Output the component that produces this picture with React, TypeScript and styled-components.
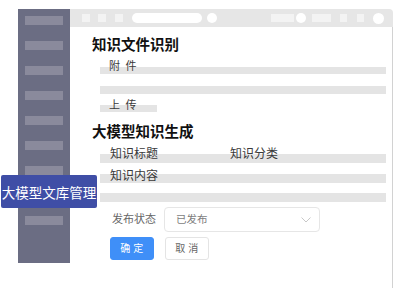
import React from 'react';
import styled, { createGlobalStyle } from 'styled-components';

const GlobalStyle = createGlobalStyle`
  html, body {
    margin: 0;
    padding: 0;
    background: #ffffff;
  }
  body {
    font-family: "Noto Sans CJK SC", "Noto Sans", sans-serif;
    color: #333;
  }
`;

const Page = styled.div`
  position: relative;
  width: 400px;
  height: 288px;
  overflow: hidden;
`;

const Frame = styled.div`
  display: flex;
  align-items: flex-start;
  margin-left: 18px;
  padding-top: 9px;
  height: 279px;
`;

const Sidebar = styled.div`
  width: 52px;
  height: 254px;
  background: #6b6d83;
  display: flex;
  flex-direction: column;
  align-items: center;
  gap: 16px;
  padding-top: 7px;
  box-sizing: border-box;
`;

const SideBar = styled.div`
  width: 38px;
  height: 9px;
  background: #8a8a9c;
`;

const Main = styled.div`
  width: 323px;
  height: 100%;
  display: flex;
  flex-direction: column;
`;

const TopBar = styled.div`
  height: 18px;
  background: #e6e6e6;
  border-top-right-radius: 4px;
  display: flex;
  align-items: center;
  justify-content: space-between;
  padding: 0 9px 0 12px;
`;

const TopGroup = styled.div`
  display: flex;
  align-items: center;
`;

const TopItem = styled.div<{ $w: number; $h?: number; $ml?: number; $round?: boolean; $light?: boolean }>`
  width: ${(p) => p.$w}px;
  height: ${(p) => p.$h ?? 8}px;
  margin-left: ${(p) => p.$ml ?? 0}px;
  border-radius: ${(p) => (p.$round ? '999px' : '0')};
  background: ${(p) => (p.$light ? '#f3f3f3' : '#ffffff')};
`;

const Content = styled.div`
  flex: 1;
  border-right: 1px solid #d2d2d2;
  padding: 8px 6px 0 22px;
  display: flex;
  flex-direction: column;
  align-items: flex-start;
`;

const Title = styled.div<{ $top: number }>`
  margin-top: ${(p) => p.$top}px;
  font-size: 14.5px;
  line-height: 18px;
  font-weight: 600;
  color: #111;
  white-space: nowrap;
`;

// grey placeholder bar; the label sits partly above it
const Field = styled.div<{ $top: number; $h: number; $lh?: number; $off: number; $w?: number; $fs?: number; $pad?: number; $ls?: number }>`
  margin-top: ${(p) => p.$top}px;
  margin-left: 8px;
  align-self: ${(p) => (p.$w ? 'flex-start' : 'stretch')};
  width: ${(p) => (p.$w ? `${p.$w}px` : 'auto')};
  height: ${(p) => p.$h}px;
  line-height: ${(p) => p.$lh ?? p.$h}px;
  font-size: ${(p) => p.$fs ?? 12}px;
  letter-spacing: ${(p) => p.$ls ?? 0}px;
  padding-left: ${(p) => p.$pad ?? 10}px;
  box-sizing: border-box;
  background: linear-gradient(to bottom, transparent ${(p) => p.$off}px, #e4e4e4 ${(p) => p.$off}px);
  color: #3a3a3a;
  white-space: pre;
  display: flex;
`;

const FieldLabel = styled.span<{ $w?: number }>`
  display: inline-block;
  width: ${(p) => (p.$w ? `${p.$w}px` : 'auto')};
`;

const Form = styled.div`
  margin-left: 18px;
  display: flex;
  flex-direction: column;
`;

const FormRow = styled.div`
  margin-top: 5px;
  display: flex;
  align-items: center;
`;

const FormLabel = styled.div`
  width: 54px;
  padding: 0 0 3px 2px;
  box-sizing: border-box;
  font-size: 11px;
  color: #666;
  white-space: nowrap;
`;

const Select = styled.div`
  width: 156px;
  height: 25px;
  box-sizing: border-box;
  border: 1px solid #e6e6e6;
  border-radius: 4px;
  display: flex;
  align-items: center;
  justify-content: space-between;
  padding: 0 8px 3px 11px;
  font-size: 10.5px;
  color: #7d7d7d;
`;

const Chevron = styled.svg`
  margin-top: 3px;
`;

const Buttons = styled.div`
  margin-top: 5px;
  display: flex;
  gap: 11px;
`;

const Button = styled.div<{ $primary?: boolean }>`
  width: 44px;
  height: 23px;
  box-sizing: border-box;
  border-radius: 3px;
  display: flex;
  align-items: center;
  justify-content: center;
  padding-bottom: 2px;
  font-size: 10px;
  letter-spacing: 0.5px;
  white-space: pre;
  background: ${(p) => (p.$primary ? '#3f8ff8' : '#ffffff')};
  color: ${(p) => (p.$primary ? '#ffffff' : '#666')};
  border: 1px solid ${(p) => (p.$primary ? '#3f8ff8' : '#e4e4e4')};
`;

const Badge = styled.div`
  position: absolute;
  left: 1px;
  top: 175px;
  width: 96px;
  height: 33px;
  background: #3f4ea6;
  border-radius: 2px;
  color: #ffffff;
  font-size: 13.5px;
  display: flex;
  align-items: center;
  justify-content: center;
  white-space: nowrap;
`;

export default function App() {
  return (
    <Page>
      <GlobalStyle />
      <Frame>
        <Sidebar>
          {Array.from({ length: 9 }).map((_, i) => (
            <SideBar key={i} />
          ))}
        </Sidebar>
        <Main>
          <TopBar>
            <TopGroup>
              <TopItem $w={8} $light />
              <TopItem $w={8} $ml={8} $light />
              <TopItem $w={8} $ml={9} $light />
              <TopItem $w={70} $h={10} $ml={9} $round />
              <TopItem $w={10} $h={10} $ml={5} $round />
            </TopGroup>
            <TopGroup>
              <TopItem $w={23} $light />
              <TopItem $w={10} $h={10} $ml={2} $round />
              <TopItem $w={19} $ml={6} $light />
              <TopItem $w={7} $ml={9} $light />
              <TopItem $w={7} $ml={10} $light />
              <TopItem $w={11} $h={11} $ml={9} $round />
            </TopGroup>
          </TopBar>
          <Content>
            <Title $top={0}>知识文件识别</Title>
            <Field $top={7} $h={14} $lh={10} $off={7} $fs={11} $pad={9} $ls={1.5}>附 件</Field>
            <Field $top={12} $h={8} $off={0} />
            <Field $top={5} $h={13} $lh={10} $off={6} $fs={11} $pad={9} $w={57} $ls={1.5}>上 传</Field>
            <Title $top={10}>大模型知识生成</Title>
            <Field $top={6} $h={17} $lh={14} $off={8}>
              <FieldLabel $w={120}>知识标题</FieldLabel>
              <FieldLabel>知识分类</FieldLabel>
            </Field>
            <Field $top={5} $h={15} $lh={14} $off={6}>知识内容</Field>
            <Field $top={10} $h={9} $off={0} />
            <Form>
              <FormRow>
                <FormLabel>发布状态</FormLabel>
                <Select>
                  <span>已发布</span>
                  <Chevron width="10" height="6" viewBox="0 0 10 6" fill="none">
                    <polyline points="0.5,0.5 5,5 9.5,0.5" stroke="#c8c8c8" strokeWidth="1" />
                  </Chevron>
                </Select>
              </FormRow>
              <Buttons>
                <Button $primary>确 定</Button>
                <Button>取 消</Button>
              </Buttons>
            </Form>
          </Content>
        </Main>
      </Frame>
      <Badge>大模型文库管理</Badge>
    </Page>
  );
}
